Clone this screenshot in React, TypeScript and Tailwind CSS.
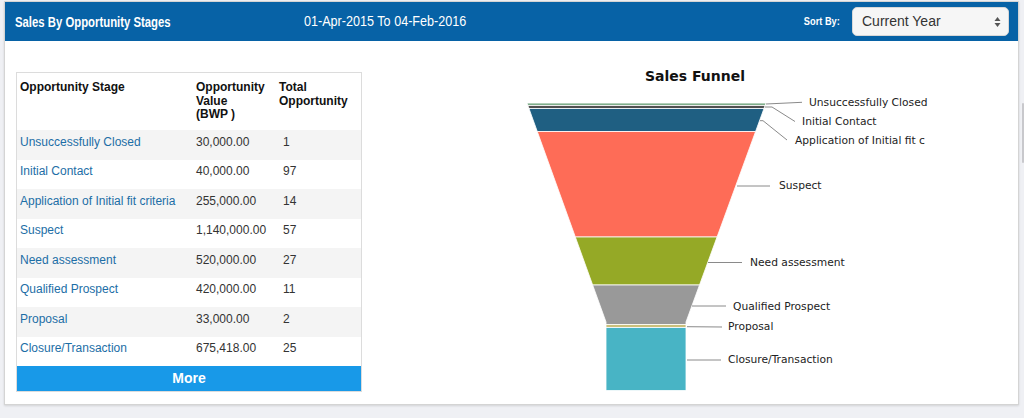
import React from 'react'

const rows = [
  { stage: 'Unsuccessfully Closed', value: '30,000.00', total: '1' },
  { stage: 'Initial Contact', value: '40,000.00', total: '97' },
  { stage: 'Application of Initial fit criteria', value: '255,000.00', total: '14' },
  { stage: 'Suspect', value: '1,140,000.00', total: '57' },
  { stage: 'Need assessment', value: '520,000.00', total: '27' },
  { stage: 'Qualified Prospect', value: '420,000.00', total: '11' },
  { stage: 'Proposal', value: '33,000.00', total: '2' },
  { stage: 'Closure/Transaction', value: '675,418.00', total: '25' },
]

// funnel edges, in page coordinates (the svg viewBox is offset to match)
const TOP = 103
const NECK = 322
function xL(y: number) {
  return y >= NECK ? 606 : 527 + (y - TOP) * 0.3607
}
function xR(y: number) {
  return y >= NECK ? 686 : 766 - (y - TOP) * 0.3653
}

const segments = [
  { y0: 103, y1: 105.5, color: '#7fae8a' },
  { y0: 105.5, y1: 108.5, color: '#505050' },
  { y0: 108.5, y1: 131.5, color: '#1f5f82' },
  { y0: 131.5, y1: 237, color: '#fe6c57' },
  { y0: 237, y1: 285, color: '#95a926' },
  { y0: 285, y1: 324.5, color: '#999999' },
  { y0: 324.5, y1: 327.5, color: '#cbbf7b' },
  { y0: 327.5, y1: 390.5, color: '#48b4c5' },
]

function segPoints(y0: number, y1: number) {
  const pts: [number, number][] = [[xL(y0), y0], [xR(y0), y0]]
  if (y0 < NECK && y1 > NECK) pts.push([xR(NECK), NECK])
  pts.push([xR(y1), y1], [xL(y1), y1])
  if (y0 < NECK && y1 > NECK) pts.push([xL(NECK), NECK])
  return pts.map((p) => p.join(',')).join(' ')
}

const labels = [
  { text: 'Unsuccessfully Closed', x: 809, y: 103, line: '766,104 802,102.3' },
  { text: 'Initial Contact', x: 802, y: 122, line: '765,107 772,107 795,121.5' },
  { text: 'Application of Initial fit c', x: 795, y: 141, line: '760,120.7 763,120.7 787,140' },
  { text: 'Suspect', x: 779, y: 186, line: '737,186 770,186' },
  { text: 'Need assessment', x: 750, y: 263, line: '708,262.5 742,262.5' },
  { text: 'Qualified Prospect', x: 733, y: 307, line: '692,306 726,306' },
  { text: 'Proposal', x: 728, y: 327, line: '687,326.7 722,327' },
  { text: 'Closure/Transaction', x: 728, y: 360, line: '687,360 721,360' },
]

function Funnel() {
  return (
    <svg width="550" height="340" viewBox="380 60 550 340" className="ml-[18px] shrink-0 overflow-hidden">
      <text x="695" y="81" textAnchor="middle" fontFamily="'DejaVu Sans', sans-serif" fontWeight="bold" fontSize="14" fill="#111">
        Sales Funnel
      </text>
      {segments.map((s, i) => (
        <polygon key={i} points={segPoints(s.y0, s.y1)} fill={s.color} stroke="#fff" strokeWidth="0.8" />
      ))}
      {labels.map((l) => (
        <g key={l.text}>
          <polyline points={l.line} fill="none" stroke="#8a8a8a" strokeWidth="1" />
          <text x={l.x} y={l.y} dominantBaseline="middle" fontFamily="'DejaVu Sans', sans-serif" fontSize="10.7" fill="#222">
            {l.text}
          </text>
        </g>
      ))}
    </svg>
  )
}

export default function App() {
  return (
    <div className="relative w-[1024px] h-[418px] bg-[#eff0f4] pt-[1px] pl-[4px] pr-[5px] overflow-hidden" style={{ fontFamily: "'Liberation Sans', Arial, sans-serif" }}>
      <div className="h-[404px] bg-white border border-[#d4d4d4] shadow-[0_1px_2px_rgba(0,0,0,0.12)]">
        <div className="h-[39px] bg-[#0762a6] flex items-center pl-[10px] pr-[9px] text-white">
          <div className="w-[289px] shrink-0">
            <span className="inline-block origin-left scale-x-[0.81] text-[14px] font-bold whitespace-nowrap">Sales By Opportunity Stages</span>
          </div>
          <span className="inline-block origin-left scale-x-[0.9] text-[14px] whitespace-nowrap">01-Apr-2015 To 04-Feb-2016</span>
          <span className="ml-auto mr-[12px] inline-block origin-right scale-x-[0.84] text-[11px] font-bold whitespace-nowrap">Sort By:</span>
          <div className="w-[157px] h-[29px] rounded-[5px] bg-[#f6f6f6] border border-[#d8d8d8] flex items-center pl-[9px] pr-[7px] text-[#333] text-[14px]">
            <span>Current Year</span>
            <svg className="ml-auto" width="7" height="12" viewBox="0 0 7 12">
              <path d="M3.5 1 L6.5 5 L0.5 5 Z" fill="#555" />
              <path d="M3.5 11 L6.5 7 L0.5 7 Z" fill="#555" />
            </svg>
          </div>
        </div>
        <div className="flex items-start pl-[11px] pt-[19px]">
          <div className="mt-[12px] w-[346px] shrink-0 border border-[#dcdcdc] text-[12px]">
            <div className="flex h-[57px] pt-[8px] font-bold text-[#111] leading-[13.5px]">
              <div className="w-[179px] pl-[3px]">Opportunity Stage</div>
              <div className="w-[83px]">Opportunity<br />Value<br />(BWP )</div>
              <div>Total<br />Opportunity</div>
            </div>
            {rows.map((r, i) => (
              <div key={r.stage} className={`flex items-center h-[29.5px] pb-[6px] ${i % 2 === 0 ? 'bg-[#f4f4f4]' : 'bg-white'}`}>
                <div className="w-[179px] pl-[3px] text-[#1c6ea6]">{r.stage}</div>
                <div className="w-[87px] text-[#333]">{r.value}</div>
                <div className="text-[#333]">{r.total}</div>
              </div>
            ))}
            <div className="h-[25px] bg-[#1899e8] text-white text-[14px] font-bold flex items-center justify-center">More</div>
          </div>
          <Funnel />
        </div>
      </div>
      <div className="absolute right-0 top-[103px] w-[2px] h-[60px] bg-[#c8c8cc] rounded-full" />
    </div>
  )
}
